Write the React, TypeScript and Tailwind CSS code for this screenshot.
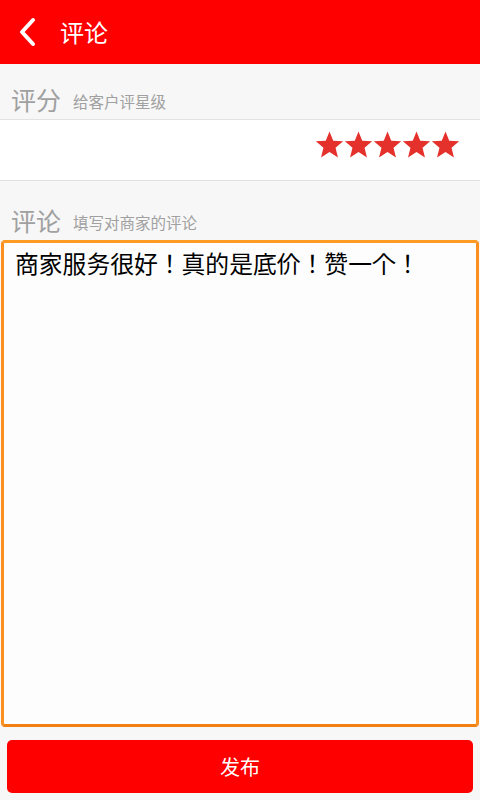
import { useEffect, useRef, useState } from 'react'

const FONT = { fontFamily: '"Noto Sans CJK SC", "Noto Sans", sans-serif' }
const AREA_FONT = { fontFamily: '"Noto Sans CJK JP", "Noto Sans CJK SC", sans-serif' }

function Star() {
  return (
    <svg viewBox="0 0 24 24" className="w-[29px] h-[29px]">
      <path
        d="M12 1.2l3.1 7.6 8.2.6-6.3 5.3 2 8-7-4.4-7 4.4 2-8L.7 9.4l8.2-.6z"
        fill="#e5312b"
      />
    </svg>
  )
}

export default function App() {
  const [text, setText] = useState('商家服务很好！真的是底价！赞一个！')
  const areaRef = useRef<HTMLTextAreaElement>(null)

  useEffect(() => {
    const el = areaRef.current
    if (el) {
      el.focus()
      el.setSelectionRange(el.value.length, el.value.length)
    }
  }, [])

  return (
    <div className="w-[480px] h-[800px] bg-[#f7f7f7] flex flex-col overflow-hidden" style={FONT}>
      {/* 顶栏 */}
      <div className="h-16 bg-[#ff0000] flex items-center shrink-0">
        <svg viewBox="0 0 20 30" className="w-[20px] h-[30px] ml-[18px]">
          <path d="M15 3L4 15l11 12" fill="none" stroke="white" strokeWidth="4" strokeLinecap="round" strokeLinejoin="round" />
        </svg>
        <span className="text-white text-[24px] ml-[22px] leading-none">评论</span>
      </div>

      {/* 评分 */}
      <div className="flex items-end px-[11px] h-[55px] pb-[7px] shrink-0">
        <span className="text-[#a0a0a0] text-[25px] leading-none">评分</span>
        <span className="text-[#a0a0a0] text-[15.5px] leading-none ml-[12px] mb-[3px]">给客户评星级</span>
      </div>
      <div className="h-[62px] bg-white border-y border-[#e2e2e2] flex items-start justify-end pr-[20px] pt-[10px] shrink-0">
        {[0, 1, 2, 3, 4].map(i => <Star key={i} />)}
      </div>

      {/* 评论 */}
      <div className="flex items-end px-[11px] h-[59px] pb-[7px] shrink-0">
        <span className="text-[#a0a0a0] text-[25px] leading-none">评论</span>
        <span className="text-[#a0a0a0] text-[15.5px] leading-none ml-[12px] mb-[3px]">填写对商家的评论</span>
      </div>
      <div className="mx-[1px] h-[487px] rounded-[4px] border-[3px] border-t-[#ff9a22] border-x-[#fb9020] border-b-[#f28010] bg-[#fdfdfd] shrink-0">
        <textarea
          ref={areaRef}
          value={text}
          onChange={e => setText(e.target.value)}
          className="w-full h-full resize-none bg-transparent outline-none pl-[11px] pr-[12px] pt-[4px] text-[23.8px] text-black leading-[32px] caret-[#333]"
          style={AREA_FONT}
        />
      </div>

      {/* 发布 */}
      <div className="px-[7px] pt-[13px]">
        <button className="w-full h-[53px] bg-[#ff0000] rounded-[5px] text-white text-[20px]" style={FONT}>
          发布
        </button>
      </div>
    </div>
  )
}
